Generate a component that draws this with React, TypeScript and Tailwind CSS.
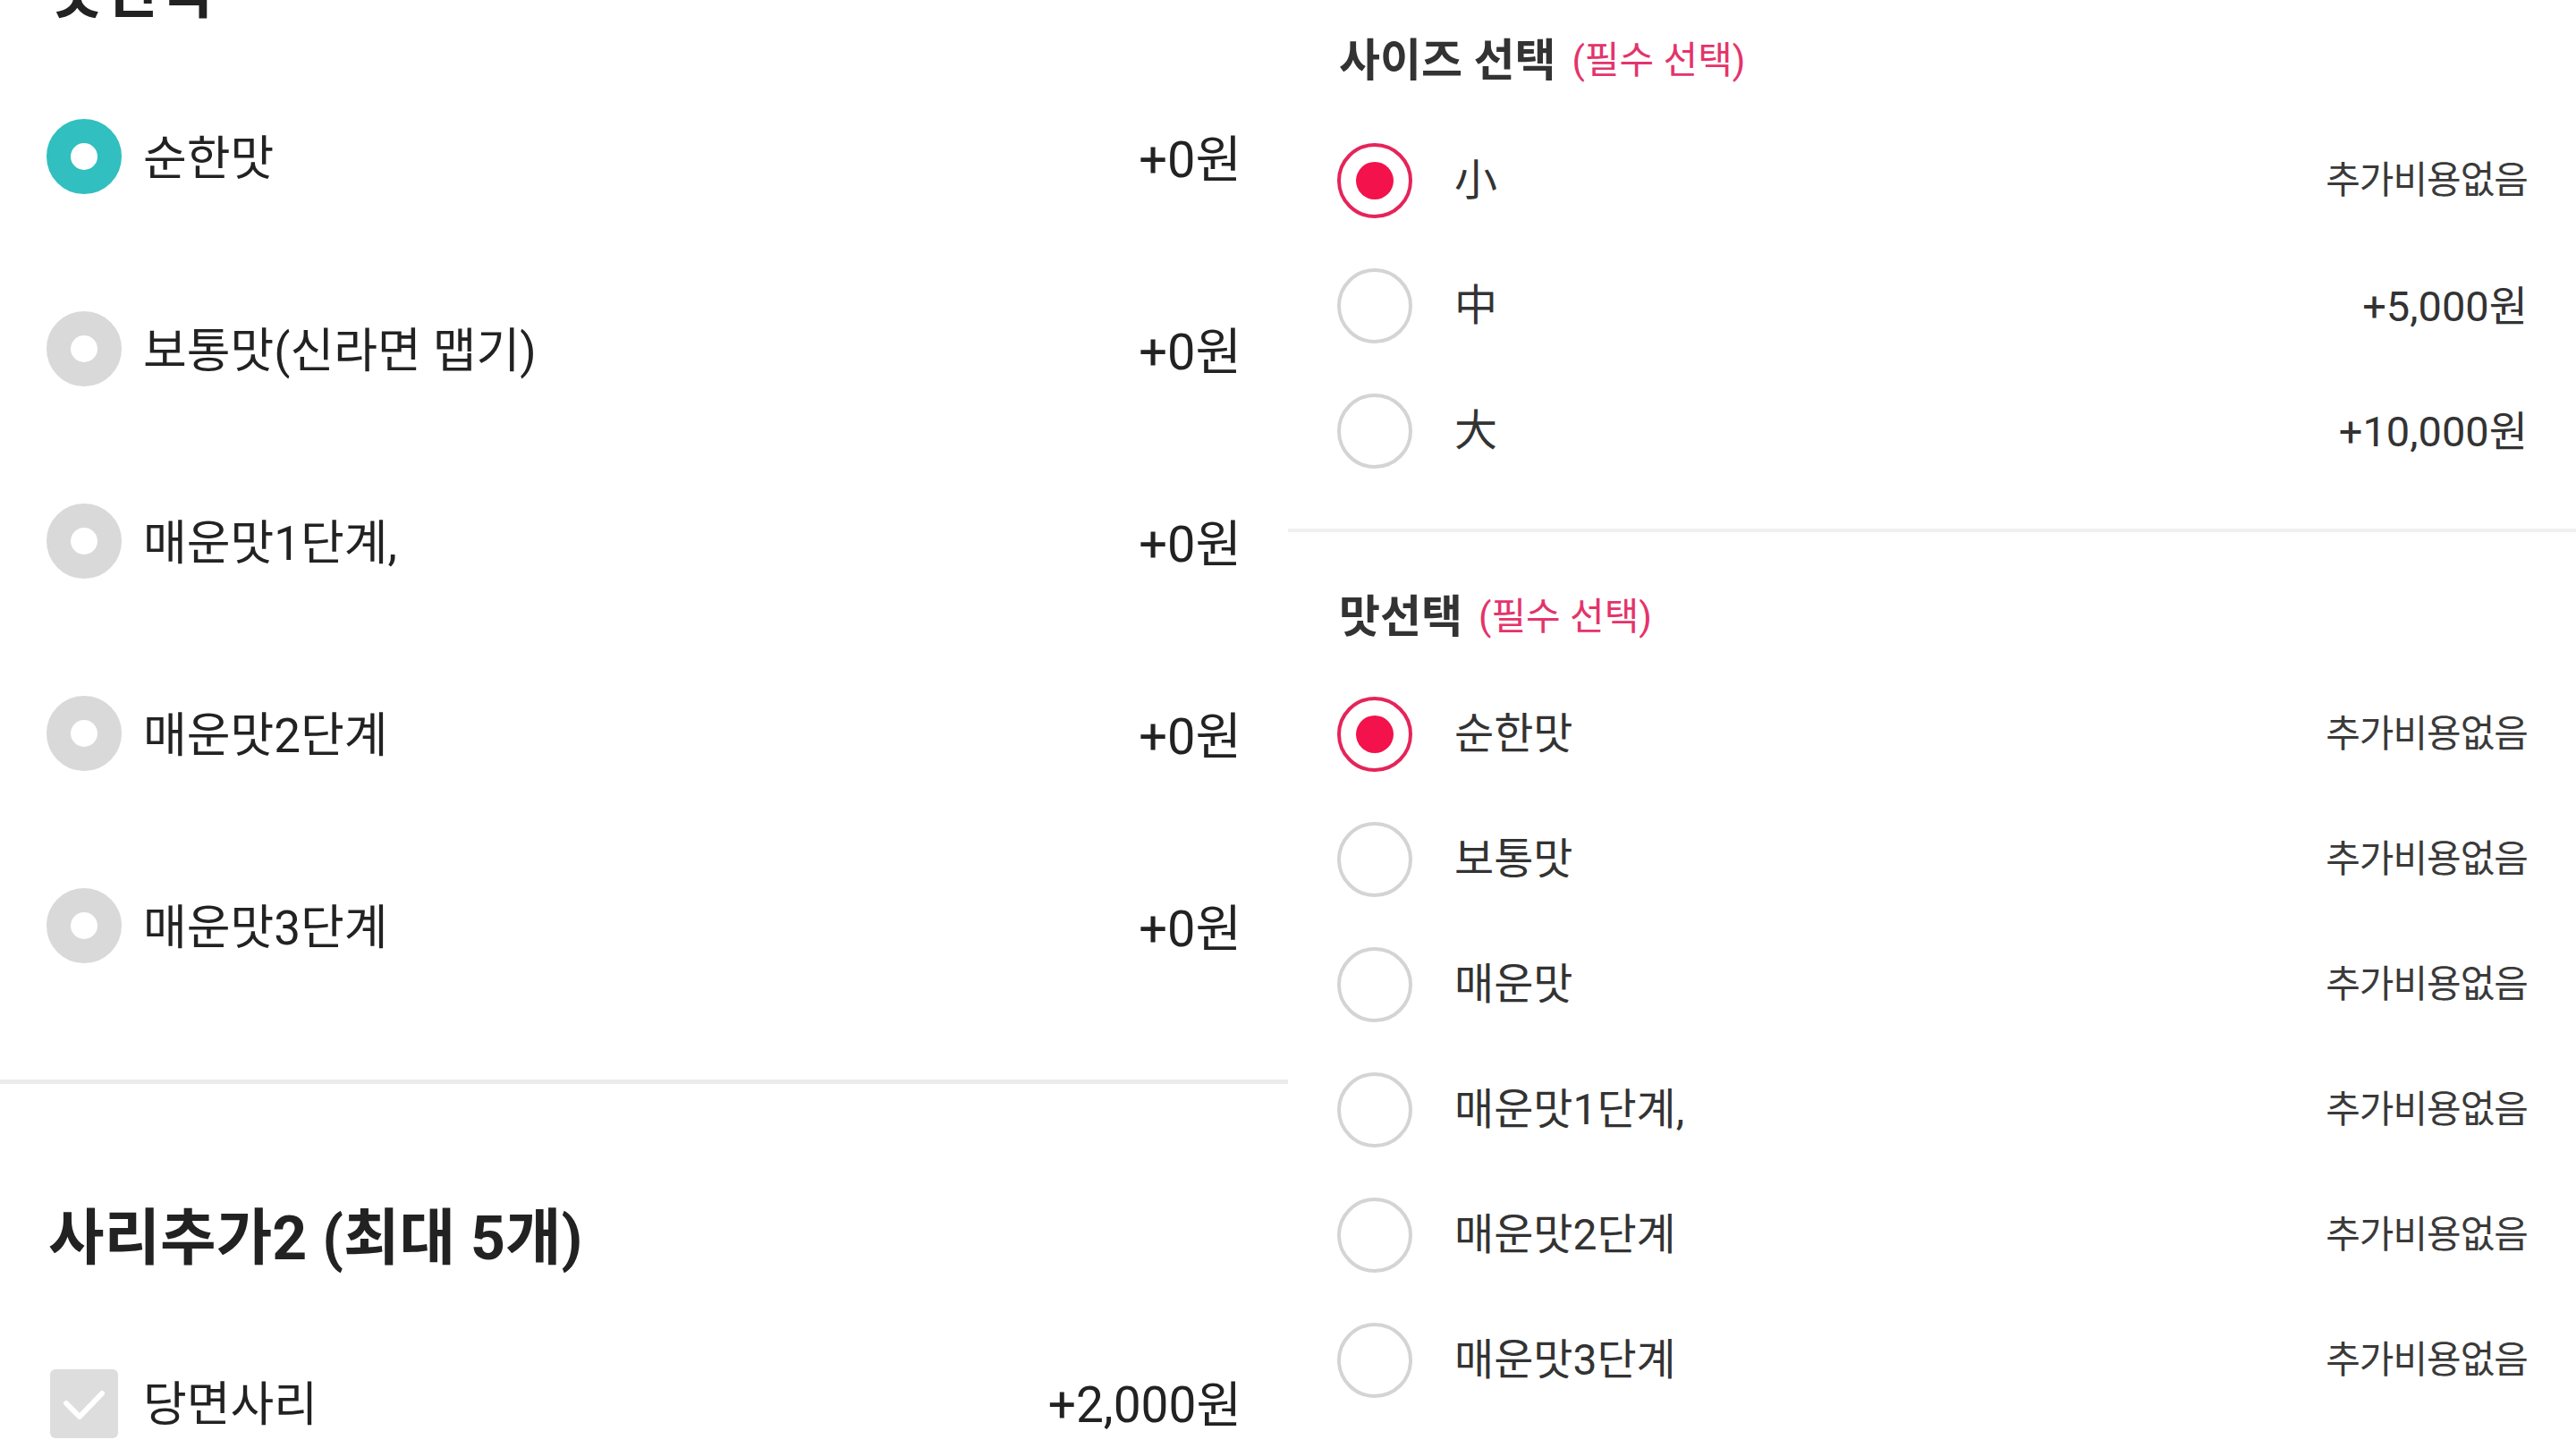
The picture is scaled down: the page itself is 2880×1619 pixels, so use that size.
import React from 'react';

const FONT = "font-['Roboto','Noto_Sans_CJK_KR',sans-serif]";

const spicyLevels = ['순한맛', '보통맛(신라면 맵기)', '매운맛1단계,', '매운맛2단계', '매운맛3단계'];

const sizes = [
  { label: '小', price: '추가비용없음', selected: true },
  { label: '中', price: '+5,000원', selected: false },
  { label: '大', price: '+10,000원', selected: false },
];

const tastes = ['순한맛', '보통맛', '매운맛', '매운맛1단계,', '매운맛2단계', '매운맛3단계'];

// thick donut radio used on the left sheet
const DonutRadio: React.FC<{ active?: boolean }> = ({ active }) => (
  <div
    className={`h-[84px] w-[84px] shrink-0 rounded-full border-[27px] bg-white ${
      active ? 'border-[#31bfc0]' : 'border-[#d9d9d9]'
    }`}
  />
);

// thin outlined radio used on the right sheet
const RingRadio: React.FC<{ active?: boolean }> = ({ active }) =>
  active ? (
    <div className="flex h-[84px] w-[84px] shrink-0 items-center justify-center rounded-full border-[4px] border-[#e5245a] bg-white">
      <div className="h-[42px] w-[42px] rounded-full bg-[#f3124b]" />
    </div>
  ) : (
    <div className="h-[84px] w-[84px] shrink-0 rounded-full border-[4px] border-[#d4d4d4] bg-white" />
  );

const LeftPanel: React.FC = () => (
  <div className="flex w-1/2 flex-col">
    <div className="-mt-[58px] flex h-[100px] items-center px-[55px] text-[66px] font-bold leading-none text-[#222]">
      맛선택
    </div>

    <div className="mt-[25px] flex flex-col pl-[52px] pr-[52px]">
      {spicyLevels.map((name, i) => (
        <div key={name} className="flex h-[215px] items-center">
          <DonutRadio active={i === 0} />
          <span className="ml-[24px] pt-[8px] text-[53px] leading-none text-[#222]">{name}</span>
          <span className="ml-auto pt-[8px] text-[56px] leading-none text-[#222]">+0원</span>
        </div>
      ))}
    </div>

    <div className="mt-[65px] h-[5px] bg-[#ebebeb]" />

    <div className="mt-[123px] flex h-[100px] items-center px-[54px] text-[68px] font-bold leading-none text-[#222]">
      사리추가2 (최대 5개)
    </div>

    <div className="mt-[84px] flex h-[100px] items-center pl-[56px] pr-[52px]">
      <div className="flex h-[77px] w-[76px] shrink-0 items-center justify-center rounded-[6px] bg-[#dddddd]">
        <svg width="76" height="77" viewBox="0 0 76 77" fill="none">
          <path d="M18 38 L33 53 L58 27" stroke="#ffffff" strokeWidth="6" strokeLinecap="round" strokeLinejoin="round" />
        </svg>
      </div>
      <span className="ml-[28px] pt-[4px] text-[53px] leading-none text-[#222]">당면사리</span>
      <span className="ml-auto pt-[4px] text-[55px] leading-none text-[#222]">+2,000원</span>
    </div>
  </div>
);

const SectionTitle: React.FC<{ title: string }> = ({ title }) => (
  <div className="flex h-[80px] items-center px-[57px]">
    <span className="text-[50px] font-bold leading-none text-[#333]">{title}</span>
    <span className="ml-[18px] text-[42px] leading-none text-[#e4336b]">(필수 선택)</span>
  </div>
);

const RightRow: React.FC<{ label: string; price: string; active?: boolean }> = ({ label, price, active }) => (
  <div className="flex h-[140px] items-center pl-[55px] pr-[54px]">
    <RingRadio active={active} />
    <span className="ml-[47px] text-[48px] leading-none text-[#333]">{label}</span>
    {price === '추가비용없음' ? (
      <span className="ml-auto text-[42px] leading-none tracking-[-1px] text-[#3a3a3a]">{price}</span>
    ) : (
      <span className="ml-auto text-[47px] leading-none text-[#333]">{price}</span>
    )}
  </div>
);

const RightPanel: React.FC = () => (
  <div className="flex w-1/2 flex-col pt-[28px]">
    <SectionTitle title="사이즈 선택" />
    <div className="mt-[24px] flex flex-col">
      {sizes.map((s) => (
        <RightRow key={s.label} label={s.label} price={s.price} active={s.selected} />
      ))}
    </div>

    <div className="mt-[39px] h-[4px] bg-[#f0f0f0]" />

    <div className="mt-[55px]">
      <SectionTitle title="맛선택" />
    </div>
    <div className="mt-[21px] flex flex-col">
      {tastes.map((t, i) => (
        <RightRow key={t} label={t} price="추가비용없음" active={i === 0} />
      ))}
    </div>
  </div>
);

export default function App() {
  return (
    <div className={`flex h-[1619px] w-full overflow-hidden bg-white ${FONT}`}>
      <LeftPanel />
      <RightPanel />
    </div>
  );
}
